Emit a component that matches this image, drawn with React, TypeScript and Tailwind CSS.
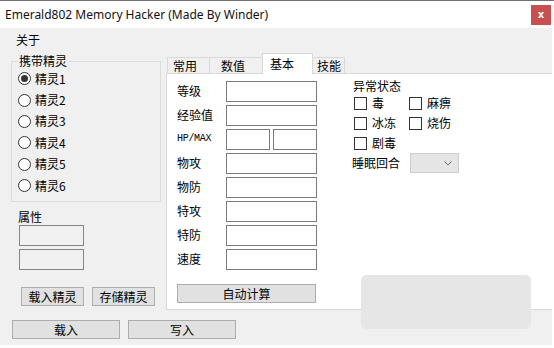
import React from "react";

const slots = ["精灵1", "精灵2", "精灵3", "精灵4", "精灵5", "精灵6"];

const statRows = [
  { label: "等级" },
  { label: "经验值" },
  { label: "HP/MAX", split: true },
  { label: "物攻" },
  { label: "物防" },
  { label: "特攻" },
  { label: "特防" },
  { label: "速度" },
];

const tabs = [
  { label: "常用", cls: "w-[42px] pl-[5px] h-[16px] bg-[#f0f0f0] border-t border-l" },
  { label: "数值", cls: "w-[53px] pl-[11px] h-[16px] bg-[#f0f0f0] border-t border-l" },
  { label: "基本", cls: "w-[51px] pl-[7px] h-[21px] -mb-px bg-white border-t border-l border-r relative z-10" },
  { label: "技能", cls: "w-[32px] pl-[4px] h-[16px] bg-[#f0f0f0] border-t border-r" },
];

function WinButton({ label, className }: { label: string; className: string }) {
  return (
    <button className={`h-[19px] bg-[#e1e1e1] border border-[#adadad] flex items-center justify-center leading-none ${className}`}>
      {label}
    </button>
  );
}

function Check({ label, width }: { label: string; width?: string }) {
  return (
    <div className={`flex items-center gap-[5px] ${width ?? ""}`}>
      <span className="w-[13px] h-[13px] border border-[#333333] bg-white ml-[1px]" />
      <span>{label}</span>
    </div>
  );
}

export default function App() {
  return (
    <div className="w-[554px] h-[348px] bg-white relative overflow-hidden text-[12px] text-black font-['Noto_Sans_CJK_SC',sans-serif]">
      <div className="h-[28px] border-t border-[#707070] bg-white flex items-center justify-between pl-[5px] pr-[3px]">
        <span className="font-['Noto_Sans',sans-serif] text-[12px] text-[#111]">
          Emerald802 Memory Hacker (Made By Winder)
        </span>
        <span className="w-[20px] h-[20px] bg-[#c75050] text-white font-bold text-[10px] flex items-center justify-center font-['DejaVu_Sans',sans-serif] leading-none">
          x
        </span>
      </div>

      <div className="w-[552px] h-[317px] bg-[#f0f0f0] flex flex-col">
        <div className="h-[24px] flex items-center pl-[16px]">关于</div>

        <div className="flex">
          <div className="w-[161px] pl-[11px] flex flex-col">
            <fieldset className="mt-[2px] w-[150px] border border-[#dcdcdc] pb-[5px]">
              <legend className="ml-[6px] px-[1px] leading-[14px]">携带精灵</legend>
              <div className="pl-[6px] flex flex-col">
                {slots.map((s, i) => (
                  <div key={s} className="h-[21.4px] flex items-center gap-[4px]">
                    <span className="w-[13px] h-[13px] rounded-full border border-[#333333] bg-white flex items-center justify-center">
                      {i === 0 && <span className="w-[7px] h-[7px] rounded-full bg-[#333333]" />}
                    </span>
                    <span>{s}</span>
                  </div>
                ))}
              </div>
            </fieldset>

            <div className="mt-[8px] h-[14px] leading-[14px] pl-[7px]">属性</div>
            <div className="ml-[8px] mt-[1px] w-[65px] h-[21px] border border-[#858585] bg-[#f0f0f0]" />
            <div className="ml-[8px] mt-[3px] w-[65px] h-[21px] border border-[#858585] bg-[#f0f0f0]" />

            <div className="mt-[17px] ml-[10px] flex gap-[8px]">
              <WinButton label="载入精灵" className="w-[63px]" />
              <WinButton label="存储精灵" className="w-[63px]" />
            </div>
          </div>

          <div className="ml-[5px] w-[386px] flex flex-col">
            <div className="h-[21px] flex items-end pl-[1px]">
              {tabs.map((t) => (
                <div key={t.label} className={`flex items-center border-[#d9d9d9] ${t.cls}`}>
                  {t.label}
                </div>
              ))}
            </div>

            <div className="h-[237px] bg-white border-t border-l border-b border-[#d9d9d9] flex pt-[7px] pl-[10px]">
              <div className="flex flex-col w-[140px]">
                {statRows.map((r) => (
                  <div key={r.label} className="h-[21px] mb-[3px] flex items-center">
                    <span
                      className={`w-[49px] pb-[2px] ${
                        r.split ? "font-['Liberation_Mono',monospace] text-[10px] tracking-[-0.3px]" : ""
                      }`}
                    >
                      {r.label}
                    </span>
                    {r.split ? (
                      <div className="flex gap-[3px]">
                        <div className="w-[44px] h-[21px] border border-[#7a7a7a] bg-white" />
                        <div className="w-[44px] h-[21px] border border-[#7a7a7a] bg-white" />
                      </div>
                    ) : (
                      <div className="w-[91px] h-[21px] border border-[#7a7a7a] bg-white" />
                    )}
                  </div>
                ))}
                <WinButton label="自动计算" className="mt-[11px] w-[139px]" />
              </div>

              <div className="ml-[36px] -mt-[2px] flex flex-col">
                <div className="h-[14px] leading-[14px]">异常状态</div>
                <div className="h-[20px] flex items-center">
                  <Check label="毒" width="w-[55px]" />
                  <Check label="麻痹" />
                </div>
                <div className="h-[20px] flex items-center">
                  <Check label="冰冻" width="w-[55px]" />
                  <Check label="烧伤" />
                </div>
                <div className="h-[20px] flex items-center">
                  <Check label="剧毒" />
                </div>
                <div className="h-[20px] flex items-center gap-[10px] -ml-[1px]">
                  <span>睡眠回合</span>
                  <div className="w-[49px] h-[20px] bg-[#e5e5e5] border border-[#cccccc] flex items-center justify-end pr-[6px]">
                    <svg width="8" height="5" viewBox="0 0 8 5" fill="none">
                      <path d="M0.5 0.5 L4 4 L7.5 0.5" stroke="#707070" strokeWidth="1" />
                    </svg>
                  </div>
                </div>
              </div>
            </div>
          </div>
        </div>

        <div className="mt-[10px] ml-[12px] flex gap-[8px]">
          <WinButton label="载入" className="w-[108px]" />
          <WinButton label="写入" className="w-[108px]" />
        </div>
      </div>

      <div className="absolute left-[361px] top-[275px] w-[170px] h-[54px] rounded-[5px] bg-[#e6e6e6]" />
    </div>
  );
}
